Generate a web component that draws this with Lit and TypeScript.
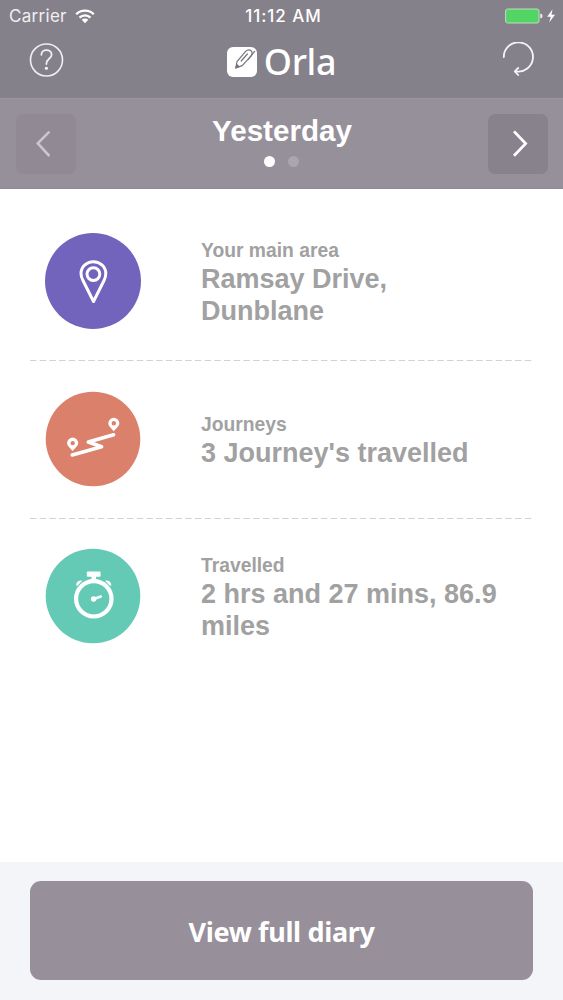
import { LitElement, html, css, svg } from "lit";
import { customElement } from "lit/decorators.js";

const pinIcon = svg`
  <g fill="none" stroke="#fff">
    <path stroke-width="3" stroke-linejoin="round" d="M0.5 20.5 L-10 -0.5 Q-12 -4 -12 -7.4 A12.4 11.9 0 0 1 12.8 -7.4 Q12.8 -4 11 -0.5Z"/>
    <circle cx="0.4" cy="-6.9" r="6.4" stroke-width="3"/>
  </g>`;

const journeyIcon = svg`
  <path fill="none" stroke="#fff" stroke-width="3.6" stroke-linecap="round" stroke-linejoin="round"
    d="M-20.7 16 L8.6 7.8 L-4.7 3 L20.6 -4.2"/>
  <path fill="#fff" fill-rule="evenodd" d="M-20.4 12.2 C-22 9.4 -25.9 7.4 -25.9 4 A5.5 5.4 0 0 1 -14.8 4 C-14.8 7.4 -18.8 9.4 -20.4 12.2Z M-20.3 1.9 A2.2 2.2 0 1 0 -20.3 6.3 A2.2 2.2 0 1 0 -20.3 1.9Z"/>
  <path fill="#fff" fill-rule="evenodd" d="M20.8 -7.6 C19.2 -10.4 15.3 -12.4 15.3 -15.8 A5.5 5.4 0 0 1 26.3 -15.8 C26.3 -12.4 22.4 -10.4 20.8 -7.6Z M20.8 -17.9 A2.2 2.2 0 1 0 20.8 -13.5 A2.2 2.2 0 1 0 20.8 -17.9Z"/>`;

const watchIcon = svg`
  <circle cx="0.8" cy="2.8" r="17.7" fill="none" stroke="#fff" stroke-width="4.2"/>
  <rect x="-6.2" y="-24.6" width="13.8" height="5.4" rx="1" fill="#fff"/>
  <rect x="-1.5" y="-20" width="4.6" height="6" fill="#fff"/>
  <path fill="#fff" d="M-17 -10.4 Q-17.2 -13 -15 -14.8 Q-13 -16 -10.6 -15.2 L-15.6 -10.2Z M18.4 -10.4 Q18.6 -13 16.4 -14.8 Q14.4 -16 12 -15.2 L17 -10.2Z"/>
  <circle cx="0.6" cy="3" r="2.7" fill="#fff"/>
  <path d="M0.6 3 L7.8 0.5" stroke="#fff" stroke-width="2.6" stroke-linecap="round"/>`;

const rows = [
  { tone: "violet", r: 48, icon: pinIcon, label: "Your main area", value: "Ramsay Drive, Dunblane" },
  { tone: "coral", r: 47.3, icon: journeyIcon, label: "Journeys", value: "3 Journey's travelled" },
  { tone: "teal", r: 47.3, icon: watchIcon, label: "Travelled", value: "2 hrs and 27 mins, 86.9 miles" },
];

@customElement("app-root")
export class AppRoot extends LitElement {
  static styles = css`
    :host {
      display: flex;
      flex-direction: column;
      height: 1000px;
      background: #fff;
      font-family: "Liberation Sans", Arial, sans-serif;
      overflow: hidden;
    }
    svg { display: block; }
    .top { flex: none; height: 98px; background: #85818a; color: #fff; }
    .status {
      display: grid;
      grid-template-columns: 1fr auto 1fr;
      align-items: center;
      height: 32px;
      padding: 0 7px 0 9px;
      font: 500 17px/32px Inter, sans-serif;
    }
    .carrier { display: flex; align-items: center; gap: 8px; font-weight: 400; color: #f1eff3; letter-spacing: 0.3px; }
    .clock { letter-spacing: 0.95px; padding-left: 2px; }
    .power { display: flex; justify-content: flex-end; }
    .nav {
      display: grid;
      grid-template-columns: 1fr auto 1fr;
      align-items: center;
      height: 56px;
      padding: 0 28px 0 28px;
    }
    .brand { display: flex; align-items: center; gap: 7px; padding-top: 3px; }
    .name { font: 500 36px/50px "Noto Sans", sans-serif; letter-spacing: -0.3px; }
    .reload { display: flex; justify-content: flex-end; }
    .days {
      flex: none;
      box-sizing: border-box;
      height: 91px;
      display: flex;
      justify-content: space-between;
      padding: 15px 15px 0 16px;
      background: #96909a;
      border-top: 1px solid #9b95a0;
      border-bottom: 1px solid #8f8b91;
      color: #fff;
    }
    .step { display: grid; place-items: center; width: 60px; height: 60px; border-radius: 7px; background: #88828d; }
    .step.off { background: #918994; }
    .day { display: flex; flex-direction: column; align-items: center; }
    .title { font-weight: 700; font-size: 29.6px; line-height: 34px; }
    .dots { display: flex; gap: 13px; margin-top: 8px; }
    .dot { width: 11px; height: 11px; border-radius: 50%; background: #fff; }
    .dot.dim { background: #aaa5ae; }
    .list { flex: 1; padding: 13.5px 30px 0; }
    .row { display: flex; align-items: center; height: 157.5px; box-sizing: border-box; padding-left: 15px; }
    .rule { display: block; margin-bottom: -1px; }
    .badge { flex: none; margin-right: 60px; }
    .violet { fill: #7264bd; }
    .coral { fill: #da806b; }
    .teal { fill: #64cab6; }
    .text { width: 310px; color: #a1a1a1; font-weight: 700; padding-top: 3px; }
    .label { font-size: 19.3px; line-height: 26px; }
    .value { font-size: 27px; line-height: 31.5px; }
    .foot { flex: none; box-sizing: border-box; height: 138px; padding: 19px 30px 0; background: #f4f5f8; }
    .button {
      display: grid;
      place-items: center;
      width: 100%;
      height: 99px;
      padding: 2px 0 0;
      border: 0;
      border-radius: 11px;
      background: #978f9a;
      color: #fff;
      font: 700 27px/36px "Noto Sans", sans-serif;
      letter-spacing: -0.35px;
    }
  `;

  render() {
    return html`
      <header class="top">
        <div class="status">
          <div class="carrier">
            <span>Carrier</span>
            <svg width="20" height="15" viewBox="0 0 20 15">
              <g fill="none" stroke="#fff" stroke-width="2.3">
                <path d="M1.2 5.2 A12.6 12.6 0 0 1 18.8 5.2"/>
                <path d="M4.5 8.7 A7.9 7.9 0 0 1 15.5 8.7"/>
              </g>
              <path fill="#fff" d="M6.7 10.8 A4.7 4.7 0 0 1 13.3 10.8 L10 14.3Z"/>
            </svg>
          </div>
          <div class="clock">11:12 AM</div>
          <div class="power">
            <svg width="52" height="16" viewBox="0 0 52 16">
              <rect x="1.6" y="1" width="33.4" height="14" rx="2" fill="#53d566" stroke="#c3d6c8"/>
              <path fill="#e8e6ea" d="M36.2 5.4 Q38.6 5.8 38.6 8 Q38.6 10.2 36.2 10.6Z"/>
              <path fill="#fff" d="M48.6 1.2 L43.2 8.8 L46.8 8.8 L45.2 14.6 L51 6.7 L47.4 6.7Z"/>
            </svg>
          </div>
        </div>
        <div class="nav">
          <svg width="36" height="36" viewBox="0 0 36 36" fill="none" stroke="#f1eff4" stroke-width="1.6">
            <circle cx="18.5" cy="18" r="16"/>
            <path stroke-width="1.8" stroke-linecap="round" d="M13.4 12.8 C13.4 6.6 23.6 6.6 23.6 12.8 C23.6 16.6 18.4 16.6 18.4 22"/>
            <circle cx="18.4" cy="26.2" r="1.5" fill="#fff" stroke="none"/>
          </svg>
          <div class="brand">
            <svg width="30" height="30" viewBox="0 0 30 30">
              <rect width="30" height="30" rx="6" fill="#fff"/>
              <g fill="none" stroke="#77737c" stroke-width="1.2" stroke-linejoin="round" stroke-linecap="round">
                <path d="M8.8 21 L10 14.6 L18.6 4.4 Q21.4 1.7 24 3.6 Q26.2 5.8 24.2 8.8 L15.2 18.6Z"/>
                <path d="M14.2 14 L20.4 7 M27.6 4.4 L21.2 12.4"/>
              </g>
              <path fill="#77737c" d="M8.2 21.8 L9.4 16.6 L13.2 19.8Z"/>
            </svg>
            <span class="name">Orla</span>
          </div>
          <div class="reload">
            <svg width="34" height="36" viewBox="0 0 34 36" fill="none" stroke="#f6f4f8" stroke-width="1.8" stroke-linecap="round" stroke-linejoin="round">
              <path d="M2.8 15 A14.6 14.6 0 1 1 15.2 29.4"/>
              <path d="M17.2 26 L13.8 29.4 L17.2 33"/>
            </svg>
          </div>
        </div>
      </header>
      <section class="days">
        <div class="step off">
          <svg width="20" height="30" viewBox="0 0 20 30" fill="none" stroke="#cbc6ce" stroke-width="2.6"><path d="M13.4 2.6 L1.8 14.4 L13.4 27"/></svg>
        </div>
        <div class="day">
          <div class="title">Yesterday</div>
          <div class="dots"><span class="dot"></span><span class="dot dim"></span></div>
        </div>
        <div class="step">
          <svg width="20" height="30" viewBox="0 0 20 30" fill="none" stroke="#fff" stroke-width="2.8"><path d="M6 2.4 L17.6 14.6 L6 26.8"/></svg>
        </div>
      </section>
      <main class="list">
        ${rows.map(
          (row, i) => html`
            <div class="row">
              <svg class="badge" width="96" height="96" viewBox="-48 -48 96 96">
                <circle class=${row.tone} r=${row.r}></circle>
                ${row.icon}
              </svg>
              <div class="text">
                <div class="label">${row.label}</div>
                <div class="value">${row.value}</div>
              </div>
            </div>
            ${i < rows.length - 1
              ? html`<svg class="rule" width="503" height="1"><path d="M0 0.5H503" stroke="#d2d2d2" stroke-width="1" stroke-dasharray="6.5 3.2"/></svg>`
              : ""}
          `
        )}
      </main>
      <footer class="foot"><button class="button">View full diary</button></footer>
    `;
  }
}
